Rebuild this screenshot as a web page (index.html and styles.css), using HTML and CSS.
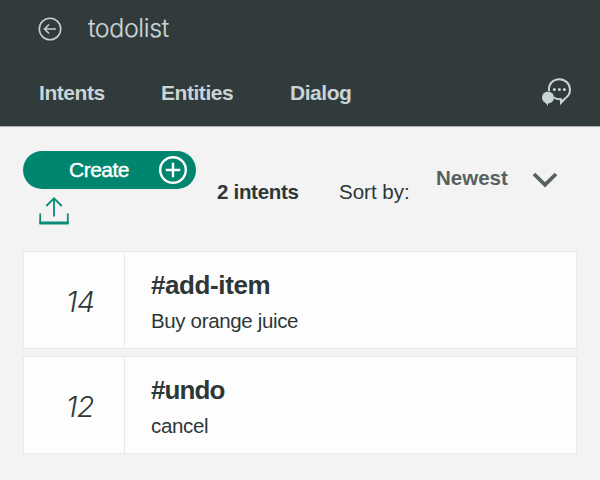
FILE: index.html
```html
<!DOCTYPE html>
<html lang="en">
<head>
<meta charset="utf-8">
<title>todolist</title>
<link rel="stylesheet" href="styles.css">
</head>
<body>
<header class="header">
  <div class="title-row">
    <svg class="back" width="24" height="24" viewBox="0 0 24 24"><circle cx="12" cy="12" r="10.700"/><path d="M18 12H7M11 7.500L6.500 12l4.500 4.500"/></svg>
    <h1 class="title"><span>todolist</span></h1>
  </div>
  <nav class="tabs">
    <a class="tab intents"><span>Intents</span></a>
    <a class="tab entities"><span>Entities</span></a>
    <a class="tab dialog"><span>Dialog</span></a>
    <svg class="chat" width="32" height="32" viewBox="0 0 32 32"><path class="line" d="M8 14C7.200 7 12 2.200 18.300 2.200c6 0 10.700 4.600 10.700 10.600 0 4-2 6.800-5 8.700l-4 4.300v-3.600c-2.500.1-5-.3-7-1.700"/><circle cx="7" cy="20.500" r="6"/><path d="M2.500 23l4.500 6v-4z"/><circle cx="13.400" cy="12.500" r="1.500"/><circle cx="18.400" cy="12.500" r="1.500"/><circle cx="23.400" cy="12.500" r="1.500"/></svg>
  </nav>
</header>
<main class="content">
  <div class="toolbar">
    <div class="actions">
      <button class="create"><span>Create</span>
        <svg width="28" height="28" viewBox="0 0 28 28"><circle cx="14" cy="14" r="12.800"/><path d="M14 6.800v14.400M6.800 14h14.400"/></svg>
      </button>
      <svg class="upload" width="30" height="28" viewBox="0 0 30 28"><path d="M15 19.500V1.500M7.300 9L15 1.300 22.700 9"/><path d="M1.200 16.500V27M28.800 16.500V27"/><path class="base" d="M.5 26h29"/></svg>
    </div>
    <strong class="count"><span>2 intents</span></strong>
    <label class="sort"><span>Sort by:</span></label>
    <span class="newest"><span>Newest</span></span>
    <svg class="chevron" width="26" height="16" viewBox="0 0 26 16"><path d="M2 2l11 10.800L24 2"/></svg>
  </div>
  <section class="card">
    <div class="number"><span>14</span></div>
    <div class="details"><h2 class="name"><span>#add-item</span></h2><p class="example one"><span>Buy orange juice</span></p></div>
  </section>
  <section class="card">
    <div class="number"><span>12</span></div>
    <div class="details"><h2 class="name undo"><span>#undo</span></h2><p class="example"><span>cancel</span></p></div>
  </section>
</main>
</body>
</html>
```
FILE: styles.css
```css
* { box-sizing: border-box; }
body { margin: 0; height: 480px; background: #f3f3f3; color: #2d3737; font-family: "Liberation Sans", Arial, sans-serif; overflow: hidden; white-space: nowrap; }
svg { display: block; flex: none; }
.header { height: 126px; background: #323b3c; color: #c9d4d6; }
.title-row { display: flex; height: 60px; padding: 17px 0 0 38px; }
.back { fill: none; stroke: #c3ced0; stroke-width: 1.600; }
.title { margin: -4px 0 0 26px; font: 300 25px/30px Inter, sans-serif; letter-spacing: -.4px; -webkit-text-stroke: .2px; }
.tabs { display: flex; padding: 21px 0 0 39px; font-size: 21px; font-weight: bold; line-height: 24px; letter-spacing: -.45px; }
.tab { flex: none; }
.intents { width: 122px; }
.entities { width: 129px; }
.dialog { width: 251px; }
.chat { margin-top: -4px; fill: #c9d4d6; }
.chat .line { fill: none; stroke: #c9d4d6; stroke-width: 2; }
.content { padding: 0 23px; border-top: 1px solid #aaafaf; }
.toolbar { display: flex; height: 124px; padding-top: 24px; line-height: 24px; }
.actions { width: 194px; flex: none; }
.create { display: flex; align-items: center; width: 173px; height: 38px; margin: 0; padding: 0 9px 0 46px; border: 0; border-radius: 19px; background: #00866f; color: #fff; font: 21px/24px "Liberation Sans", Arial, sans-serif; letter-spacing: -.5px; justify-content: space-between; -webkit-text-stroke: .4px; }
.create svg { fill: none; stroke: #fff; stroke-width: 2.400; }
.upload { margin: 8px 0 0 16px; fill: none; stroke: #0a8b75; stroke-width: 1.800; }
.upload .base { stroke-width: 3; }
.count { width: 122px; margin-top: 29px; font-size: 20.500px; letter-spacing: -.3px; flex: none; }
.sort { width: 97px; margin-top: 29px; font-size: 20.500px; letter-spacing: 0; flex: none; }
.newest { width: 97px; margin-top: 15px; color: #566160; font-size: 20.500px; font-weight: bold; flex: none; }
.chevron { margin: 21px 0 0 -1px; fill: none; stroke: #566160; stroke-width: 3.800; }
.card { display: flex; width: 554px; height: 98px; margin-bottom: 7px; background: #fdfdfd; border: 1px solid #e9e9e9; }
.number { width: 101px; padding: 34px 0 0 42px; border-right: 1px solid #e9e9e9; font: italic 300 29px/32px Inter, sans-serif; letter-spacing: -.6px; }
.details { padding: 19px 0 0 26px; }
.name { margin: 0; font-size: 26px; line-height: 28px; letter-spacing: -.4px; }
.undo { letter-spacing: -.9px; }
.example { margin: 10px 0 0; font-size: 20.500px; line-height: 24px; letter-spacing: -.35px; }
```
